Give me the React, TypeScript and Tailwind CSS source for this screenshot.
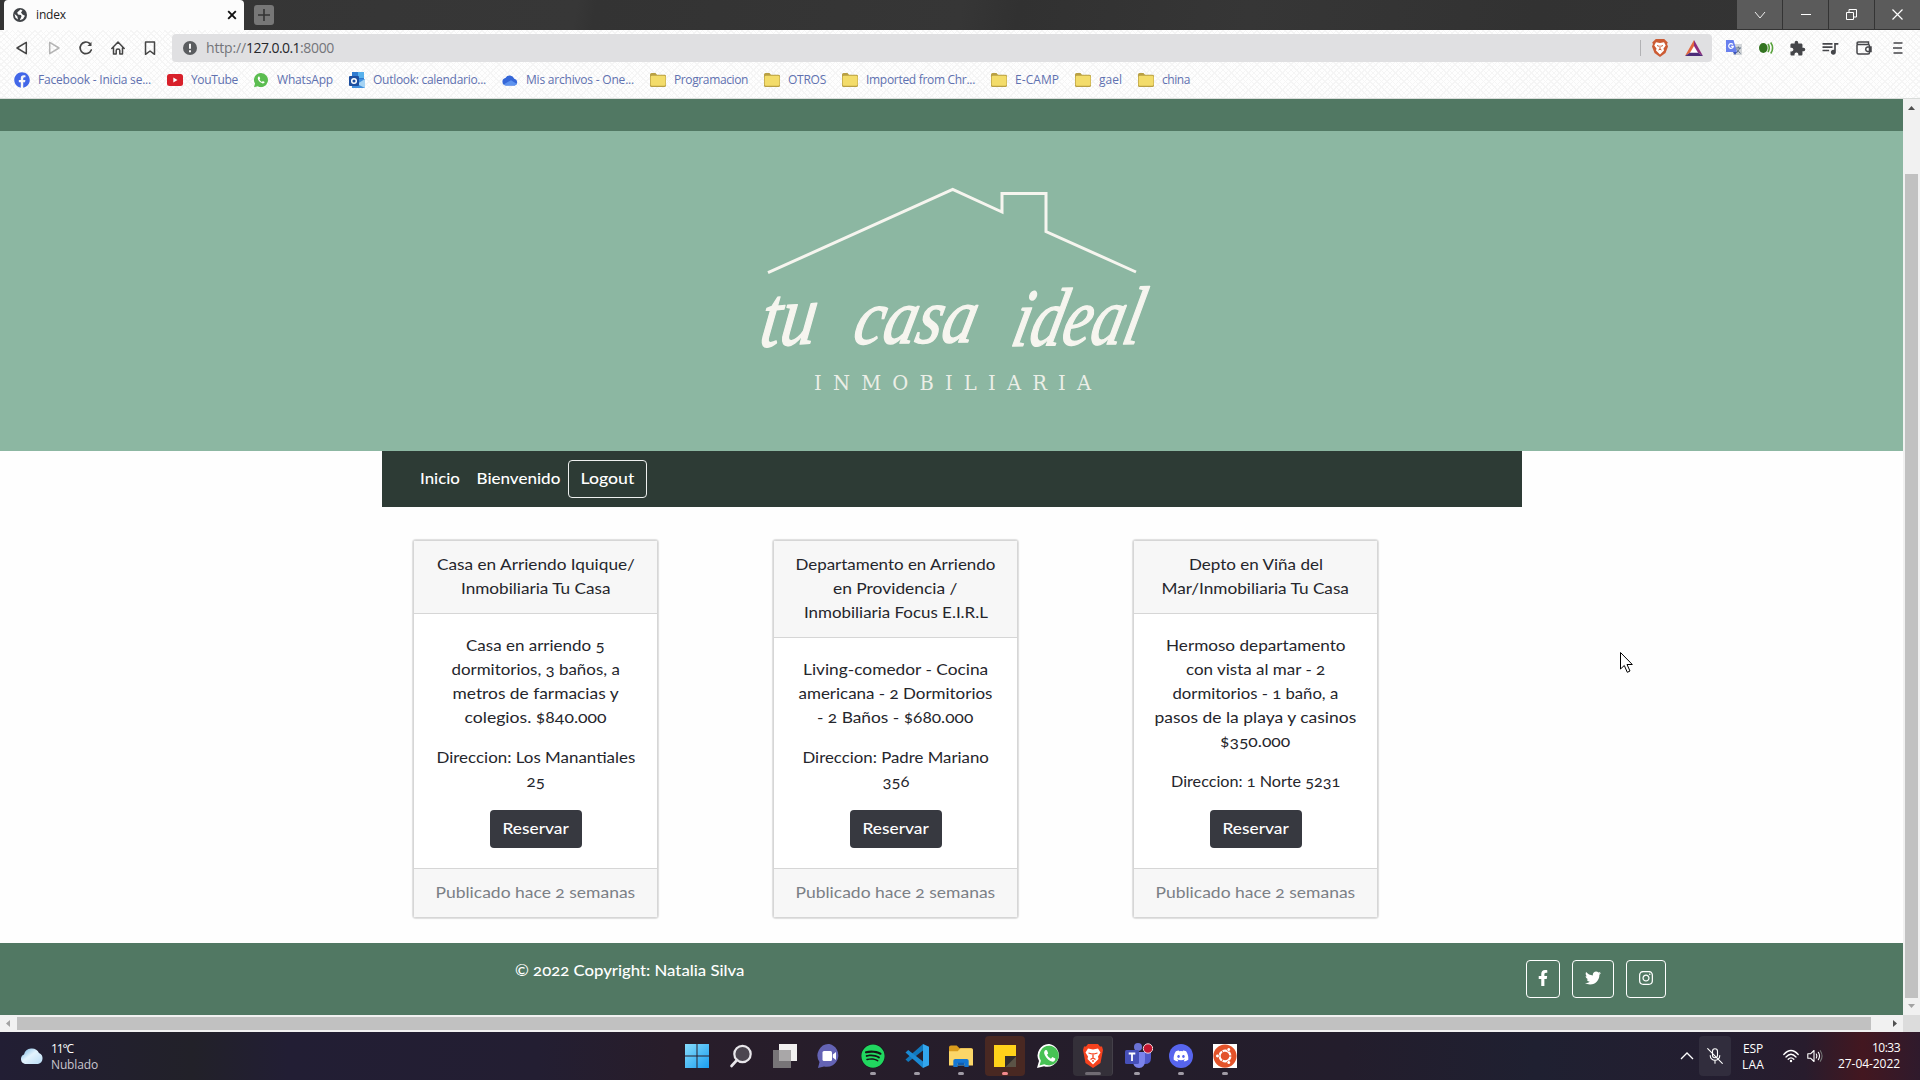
import { useLayoutEffect, useRef, type ReactNode } from "react";
import { FaFacebookF, FaTwitter, FaInstagram, FaSpotify, FaDiscord, FaUbuntu, FaFacebook } from "react-icons/fa";
import { MdExtension, MdQueueMusic } from "react-icons/md";

/* Text set to an exact advance width through letter spacing. */
function Fit({ w, children, className = "" }: { w: number; children: string; className?: string }) {
  const ref = useRef<HTMLSpanElement>(null);
  useLayoutEffect(() => {
    const el = ref.current;
    if (!el) return;
    el.style.letterSpacing = "0px";
    const natural = el.getBoundingClientRect().width;
    el.style.letterSpacing = `${(w - natural) / children.length}px`;
  }, [w, children]);
  return (
    <span ref={ref} className={`inline-block whitespace-pre ${className}`}>
      {children}
    </span>
  );
}

/* Text widened or narrowed to an exact width by stretching its letters. */
function Wide({ w, children, className = "" }: { w: number; children: string; className?: string }) {
  const ref = useRef<HTMLSpanElement>(null);
  useLayoutEffect(() => {
    const el = ref.current;
    if (el) el.style.transform = `scaleX(${w / el.offsetWidth})`;
  }, [w, children]);
  return (
    <span className={`inline-flex justify-center whitespace-pre ${className}`} style={{ width: w }}>
      <span ref={ref} className="inline-block shrink-0">{children}</span>
    </span>
  );
}

type Line = [string, number];

const Folder = () => (
  <svg width="16" height="16" viewBox="0 0 16 16">
    <path d="M0 2.500Q0 1 1.500 1H5.500L7 2.700H14.500Q16 2.700 16 4V13.500Q16 15 14.500 15H1.500Q0 15 0 13.500Z" fill="#b9a044" />
    <path d="M.7 5Q.7 3.800 2 3.800H14Q15.500 3.800 15.500 5V12.500Q15.500 13.800 14 13.800H2Q.7 13.800 .7 12.500Z" fill="#f3dc6a" />
  </svg>
);

const bookmarks: { icon: ReactNode; label: string; w: number; gap: string }[] = [
  { icon: <FaFacebook size={16} color="#4267e8" />, label: "Facebook - Inicia se...", w: 113, gap: "mr-4" },
  {
    icon: (
      <svg width="16" height="16" viewBox="0 0 16 16">
        <rect y="2" width="16" height="12" rx="2.500" fill="#d8202a" />
        <path d="M6.300 5.500L10.500 8L6.300 10.500Z" fill="#fff" />
      </svg>
    ),
    label: "YouTube", w: 47, gap: "mr-[15px]",
  },
  {
    icon: (
      <svg width="16" height="16" viewBox="0 0 16 16">
        <path d="M8 1A7 7 0 1 1 4.700 14.200L1 15.200L2 11.600A7 7 0 0 1 8 1Z" fill="#5bbd50" />
        <path d="M5.500 4.500Q4 5.500 5.200 8Q7 11.200 9.800 11.500Q11.500 11.300 11.700 10L9.800 9L9 9.900Q7.300 9.200 6.500 7.500L7.200 6.600L6.400 4.500Z" fill="#fff" />
      </svg>
    ),
    label: "WhatsApp", w: 56, gap: "mr-4",
  },
  {
    icon: (
      <svg width="16" height="16" viewBox="0 0 16 16">
        <rect x="3" width="12" height="8" fill="#2f7bd0" />
        <rect x="9" y="0" width="6" height="6" fill="#58b1ec" />
        <path d="M3 7H16V16H3Z" fill="#3f8fdd" />
        <path d="M16 7L8 12L16 16Z" fill="#a5d3f3" />
        <rect y="4" width="10" height="10" rx="1" fill="#1d4fa0" />
        <circle cx="5" cy="9" r="2.300" fill="none" stroke="#fff" strokeWidth="1.500" />
      </svg>
    ),
    label: "Outlook: calendario...", w: 113, gap: "mr-4",
  },
  {
    icon: (
      <svg width="16" height="16" viewBox="0 0 16 16">
        <path d="M4 13.500A3.800 3.800 0 0 1 3.400 6A5 5 0 0 1 12.300 6.700A3.500 3.500 0 0 1 12.700 13.500Z" fill="#3567d8" />
        <path d="M1.500 12.500L9 8.200L15 12A3.500 3.500 0 0 1 12.700 13.500H4Z" fill="#5e93ee" />
      </svg>
    ),
    label: "Mis archivos - One...", w: 108, gap: "mr-4",
  },
  { icon: <Folder />, label: "Programacion", w: 74, gap: "mr-4" },
  { icon: <Folder />, label: "OTROS", w: 38, gap: "mr-4" },
  { icon: <Folder />, label: "Imported from Chr...", w: 109, gap: "mr-4" },
  { icon: <Folder />, label: "E-CAMP", w: 44, gap: "mr-4" },
  { icon: <Folder />, label: "gael", w: 23, gap: "mr-4" },
  { icon: <Folder />, label: "china", w: 28, gap: "" },
];

const cards: { title: Line[]; body: Line[]; address: Line[] }[] = [
  {
    title: [["Casa en Arriendo Iquique/", 198], ["Inmobiliaria Tu Casa", 149]],
    body: [["Casa en arriendo 5", 139], ["dormitorios, 3 baños, a", 168], ["metros de farmacias y", 166], ["colegios. $840.000", 142]],
    address: [["Direccion: Los Manantiales", 199], ["25", 18]],
  },
  {
    title: [["Departamento en Arriendo", 200], ["en Providencia /", 124], ["Inmobiliaria Focus E.I.R.L", 184]],
    body: [["Living-comedor - Cocina", 185], ["americana - 2 Dormitorios", 194], ["- 2 Baños - $680.000", 156]],
    address: [["Direccion: Padre Mariano", 186], ["356", 27]],
  },
  {
    title: [["Depto en Viña del", 134], ["Mar/Inmobiliaria Tu Casa", 187]],
    body: [["Hermoso departamento", 180], ["con vista al mar - 2", 139], ["dormitorios - 1 baño, a", 166], ["pasos de la playa y casinos", 202], ["$350.000", 70]],
    address: [["Direccion: 1 Norte 5231", 169]],
  },
];

const Lines = ({ lines }: { lines: Line[] }) => (
  <>
    {lines.map(([text, w]) => (
      <div key={text} className="flex h-6 justify-center">
        <Wide w={w}>{text}</Wide>
      </div>
    ))}
  </>
);

function Card({ title, body, address }: (typeof cards)[number]) {
  return (
    <article className="flex w-[245px] flex-col rounded-[3px] border border-[#d6d6d6] bg-white shadow-[0_0_1px_1px_#dedede]">
      <div className="border-b border-[#d6d6d6] bg-[#f7f7f7] pb-[13px] pt-[11px]">
        <Lines lines={title} />
      </div>
      <div className="flex flex-1 flex-col items-center px-5 pb-5 pt-[19px]">
        <div className="mb-4"><Lines lines={body} /></div>
        <div className="mb-4"><Lines lines={address} /></div>
        <button className="mt-auto flex h-[38px] w-[92px] shrink-0 justify-center rounded bg-[#373940] pt-1.5 font-medium text-white">
          <Wide w={66}>Reservar</Wide>
        </button>
      </div>
      <div className="flex h-[49px] justify-center border-t border-[#d6d6d6] bg-[#f7f7f7] pt-[11px] text-[#7b8086]">
        <Wide w={200}>Publicado hace 2 semanas</Wide>
      </div>
    </article>
  );
}

const Slot = ({ children, dot = "", bg = "" }: { children: ReactNode; dot?: string; bg?: string }) => (
  <div className="flex w-11 justify-center">
    <div className={`flex h-10 w-10 flex-col items-center rounded pt-2 ${bg}`}>
      <div className="flex h-6 w-6 items-center justify-center">{children}</div>
      <div className={`mt-1 h-[3px] shrink-0 rounded-full ${dot}`} />
    </div>
  </div>
);

const DOT = "w-1.5 bg-[#a09ba5]";

function BrowserChrome() {
  return (
    <header className="shrink-0 font-['Open_Sans','Noto_Sans',sans-serif]">
      <div className="flex h-[30px] bg-[linear-gradient(100deg,#343434_0%,#373737_30%,#333_31%,#363636_50%,#313131_53%,#363636_65%,#323232_80%,#353535_100%)] pl-1">
        <div className="flex w-60 items-center rounded-t-sm bg-[#fcfcfc] pl-[9px] pr-[7px]">
          <svg width="14" height="14" viewBox="0 0 14 14">
            <circle cx="7" cy="7" r="7" fill="#404347" />
            <path d="M7.500 1.500L4.200 4.400L5 6.500L8 7L8.500 8.500L6.800 12.300L10 11L12 7.800L9.500 6.500L8 4.500L9.500 2.500Z" fill="#fff" />
            <path d="M1.500 6L4.300 8.200L5 11.500L2.500 9.800Z" fill="#fff" />
          </svg>
          <span className="ml-[9px] pb-px text-xs text-[#222]"><Fit w={30}>index</Fit></span>
          <svg className="ml-auto" width="10" height="10" viewBox="0 0 10 10"><path d="M1.200 1.200L8.800 8.800M8.800 1.200L1.200 8.800" stroke="#111" strokeWidth="1.900" /></svg>
        </div>
        <div className="ml-[10px] mt-[5px] flex h-5 w-5 items-center justify-center rounded-[3px] bg-[#777]">
          <svg width="12" height="12" viewBox="0 0 12 12"><path d="M6 0V12M0 6H12" stroke="#343434" strokeWidth="1.600" /></svg>
        </div>
        <div className="ml-auto flex h-[29px] gap-px">
          <div className="flex w-[45px] items-center justify-center bg-[#5b5b5b]"><svg width="12" height="8" viewBox="0 0 12 8"><path d="M1 1L6 7L11 1" fill="none" stroke="#eee" /></svg></div>
          <div className="flex w-[45px] items-center justify-center bg-[#5b5b5b]"><div className="h-px w-[10px] bg-white" /></div>
          <div className="flex w-[45px] items-center justify-center bg-[#5b5b5b]"><svg width="11" height="11" viewBox="0 0 11 11" fill="none" stroke="#fff"><path d="M.5 3.500H7.500V10.500H.5ZM3 3.500V.5H10.500V8H7.500" /></svg></div>
          <div className="flex w-[45px] items-center justify-center bg-[#5b5b5b]"><svg width="11" height="11" viewBox="0 0 11 11"><path d="M.5 .5L10.500 10.500M10.500 .5L.5 10.500" stroke="#fff" strokeWidth="1.200" /></svg></div>
        </div>
      </div>
      <div className="h-[69px] border-b border-[#d9dcda] bg-[repeating-linear-gradient(45deg,#f5f5f5_0_1px,transparent_1px_4px),repeating-linear-gradient(-45deg,#f5f5f5_0_1px,#fefefe_1px_4px)] pt-1">
        <div className="flex h-7 items-center">
          <div className="flex w-[172px] pl-1.5 text-[#454545]">
            <div className="flex w-8 justify-center"><svg width="16" height="16" viewBox="0 0 16 16" fill="none" stroke="currentColor" strokeWidth="1.500" strokeLinejoin="round"><path d="M12.300 2.300V13.700L3 8Z" /></svg></div>
            <div className="flex w-8 justify-center text-[#b4b4b4]"><svg width="16" height="16" viewBox="0 0 16 16" fill="none" stroke="currentColor" strokeWidth="1.500" strokeLinejoin="round"><path d="M3.700 2.300V13.700L13 8Z" /></svg></div>
            <div className="flex w-8 justify-center"><svg width="16" height="16" viewBox="0 0 16 16" fill="none" stroke="currentColor" strokeWidth="1.700" strokeLinecap="round"><path d="M13.300 10A5.800 5.800 0 1 1 11.800 3.500" /><path d="M13.500 2V6H9.500Z" fill="currentColor" stroke="none" /></svg></div>
            <div className="flex w-8 justify-center"><svg width="16" height="16" viewBox="0 0 16 16" fill="none" stroke="currentColor" strokeWidth="1.500" strokeLinejoin="round" strokeLinecap="round"><path d="M1.800 8.500L8 2L14.200 8.500M3.500 7.500V14H6.200V10.500Q6.200 9 8 9Q9.800 9 9.800 10.500V14H12.500V7.500" /></svg></div>
            <div className="flex w-8 justify-center"><svg width="16" height="16" viewBox="0 0 16 16" fill="none" stroke="currentColor" strokeWidth="1.500" strokeLinejoin="round"><path d="M3.500 2H12.500V14.300L8 11L3.500 14.300Z" /></svg></div>
          </div>
          <div className="flex h-7 w-[1540px] items-center rounded bg-[#e0e0e2] pl-[11px]">
            <svg width="14" height="14" viewBox="0 0 14 14"><circle cx="7" cy="7" r="7" fill="#5b5d60" /><path d="M7 2.800V7.800M7 9.300V11.200" stroke="#fff" strokeWidth="1.900" /></svg>
            <div className="ml-[9px] flex text-sm leading-5 text-[#74757a]">
              <Fit w={40}>http://</Fit><Fit w={54} className="text-[#26272b]">127.0.0.1</Fit><Fit w={34}>:8000</Fit>
            </div>
            <div className="ml-auto flex items-center">
              <div className="h-4 w-px bg-[#b2b2b4]" />
              <svg className="ml-[11px]" width="16" height="18" viewBox="0 0 16 18"><path d="M3.800 0H12.200L14 1.800L15.800 3.500L15 5L16 7.500L13.500 14L8 18L2.500 14L0 7.500L1 5L.2 3.500L2 1.800Z" fill="#cc5b33" /><path d="M4 3.300L8 4L12 3.300L13.700 6.500L11.500 9.500L12 11.500L8 15.500L4 11.500L4.500 9.500L2.300 6.500Z" fill="#fff" /><path d="M5 6.500L7 7.300M11 6.500L9 7.300M8 6.500V10.500M6.500 11L8 10.200L9.500 11" stroke="#cc5b33" fill="none" /></svg>
              <svg className="ml-[17px] mr-[9px]" width="18" height="16" viewBox="0 0 18 16"><path d="M9 0L0 16L9 10Z" fill="#e2653d" /><path d="M9 0L18 16L9 10Z" fill="#8c2c7c" /><path d="M0 16H18L9 10Z" fill="#4b2b78" /><path d="M9 6L13 12.700H5Z" fill="#fff" /></svg>
            </div>
          </div>
          <div className="flex flex-1 items-center text-[#45464a]">
            <svg className="ml-[14px]" width="16" height="16" viewBox="0 0 16 16"><rect x="7" y="4" width="9" height="11" fill="#d2d5d8" /><path d="M9.500 8H15M12.300 6.500V8M10.500 13L14 8M10.500 9L14.500 13.500" stroke="#61728b" fill="none" /><path d="M0 0H7.500L11 12H0Z" fill="#6980ee" /><path d="M7 12H11L9 15Z" fill="#3d55b4" /><path d="M6.800 4.500A2.300 2.300 0 1 0 7.300 6.300H5.200" fill="none" stroke="#fff" strokeWidth="1.200" /></svg>
            <svg className="ml-[17px]" width="16" height="14" viewBox="0 0 16 14"><ellipse cx="4.300" cy="7" rx="4.300" ry="5" fill="#337321" /><path d="M9 3Q11.500 7 9 11M11.700 1.500Q15.500 7 11.700 12.500" fill="none" stroke="#57a23b" strokeWidth="1.600" /></svg>
            <MdExtension className="ml-[14px]" size={17} />
            <MdQueueMusic className="ml-[14px]" size={20} />
            <svg className="ml-4" width="16" height="14" viewBox="0 0 16 14" fill="none" stroke="currentColor" strokeWidth="1.500"><path d="M1 3.500V11.500Q1 13 2.500 13H12Q13.500 13 13.500 11.500V5Q13.500 3.500 12 3.500H2.500Q1 3.500 1 2.300Q1 1 2.500 1H12.500V3.500M15 6H11.500A2.300 2.300 0 0 0 11.500 10.500H15Z" /></svg>
            <svg className="ml-[21px]" width="10" height="12" viewBox="0 0 10 12"><path d="M.5 1H9.500M0 6H9M.5 11H9.500" stroke="currentColor" strokeWidth="1.600" /></svg>
          </div>
        </div>
        <div className="flex h-9 items-center pl-[14px] text-xs leading-4 text-[#6071b0]">
          {bookmarks.map((b) => (
            <div key={b.label} className={`flex items-center gap-2 ${b.gap}`}>
              {b.icon}
              <Fit w={b.w}>{b.label}</Fit>
            </div>
          ))}
        </div>
      </div>
    </header>
  );
}

function Site() {
  return (
    <main className="h-[916px] w-[1903px] overflow-hidden bg-[#fefefe] font-[Lato,sans-serif] text-base leading-6 text-[#25262c] oldstyle-nums">
      <div className="h-8 bg-[#517863]" />
      <div className="flex h-80 justify-center bg-[#8cb7a2]">
        <svg width="460" height="320" viewBox="722 131 460 320" fill="#f6f5ef">
          <path d="M768 272.700L952.700 189.500L1002 212V193.500H1046V231.500L1136 272" fill="none" stroke="#f6f5ef" strokeWidth="3" />
          <g fontFamily="Liberation Serif, serif" fontStyle="italic" fontSize="78" stroke="#f6f5ef" strokeWidth="1.400" strokeLinejoin="round">
            <text transform="translate(758 347) rotate(-4) skewX(-12)" fontSize="86" textLength="56" lengthAdjust="spacingAndGlyphs">tu</text>
            <text transform="translate(851 344) rotate(-1) skewX(-14)" textLength="121" lengthAdjust="spacingAndGlyphs">casa</text>
            <text transform="translate(1009 346) rotate(-1) skewX(-14)" fontSize="82" textLength="129" lengthAdjust="spacingAndGlyphs">ideal</text>
          </g>
          <text x="814" y="389.500" fontFamily="DejaVu Serif, serif" fontSize="19.500" textLength="277" opacity=".9">INMOBILIARIA</text>
        </svg>
      </div>
      <div className="ml-[382px] w-[1140px]">
        <nav className="flex h-14 items-start bg-[#2d3b35] pl-[38px] pt-[9px] font-medium text-white">
          <Wide w={40} className="mt-1.5">Inicio</Wide>
          <Wide w={84} className="ml-4 mt-1.5">Bienvenido</Wide>
          <div className="ml-2 flex h-[38px] w-[79px] justify-center rounded border border-[#eef0ef] pt-[5px]"><Wide w={54}>Logout</Wide></div>
        </nav>
        <section className="ml-[31px] mt-[33px] flex h-[378px] gap-[115px]">
          {cards.map((c) => <Card key={c.title[0][0]} {...c} />)}
        </section>
      </div>
      <footer className="mt-[25px] flex h-[72px] bg-[#517863] pl-[515px] text-white">
        <Wide w={229} className="mt-[15px] h-6 font-medium">© 2022 Copyright: Natalia Silva</Wide>
        <div className="ml-[782px] mt-[17px] flex gap-3">
          <div className="flex h-[38px] w-[34px] items-center justify-center rounded border border-white pb-0.5"><FaFacebookF size={16} /></div>
          <div className="flex h-[38px] w-[42px] items-center justify-center rounded border border-white pb-0.5"><FaTwitter size={16} /></div>
          <div className="flex h-[38px] w-10 items-center justify-center rounded border border-white pb-0.5"><FaInstagram size={16} /></div>
        </div>
      </footer>
    </main>
  );
}

function Taskbar() {
  return (
    <div className="grid h-12 shrink-0 grid-cols-[675px_1fr_260px] bg-[linear-gradient(90deg,#221e34_0%,#222129_10%,#221e34_15%,#231e32_28%,#281d2a_35%,#241d2b_60%,#231d2c_70%,#1f2031_80%,#241e30_90%,#281c2d_94%,#431720_97%,#2f1a2c_100%)] font-['Open_Sans','Noto_Sans',sans-serif] text-xs leading-4 text-white">
      <div className="flex items-center pl-5">
        <svg width="23" height="18" viewBox="0 0 23 18">
          <defs><linearGradient id="cloud" x1="0" y1="0" x2="1" y2="1"><stop stopColor="#6fb1df" /><stop offset=".45" stopColor="#e3f3fd" /><stop offset="1" stopColor="#b9dcf5" /></linearGradient></defs>
          <path d="M5 17A5 5 0 0 1 4 7.500A8 8 0 0 1 19 6A5.800 5.800 0 0 1 18 17Z" fill="url(#cloud)" />
        </svg>
        <div className="ml-2 flex flex-col items-start pt-px">
          <Fit w={22}>11°C</Fit><Fit w={47} className="text-[#c9c6ce]">Nublado</Fit>
        </div>
      </div>
      <div className="flex pt-1">
        <Slot><svg width="24" height="24" viewBox="0 0 24 24"><defs><linearGradient id="win" x1="0" y1="0" x2="1" y2="1"><stop stopColor="#86dcfb" /><stop offset="1" stopColor="#1a9ef0" /></linearGradient></defs><path d="M0 0H11.500V11.500H0ZM12.500 0H24V11.500H12.500ZM0 12.500H11.500V24H0ZM12.500 12.500H24V24H12.500Z" fill="url(#win)" /></svg></Slot>
        <Slot><svg width="24" height="24" viewBox="0 0 24 24"><circle cx="13.500" cy="10" r="8.200" fill="#4c4650" stroke="#e8e6ea" strokeWidth="2.200" /><path d="M8 16L2.500 22" stroke="#e8e6ea" strokeWidth="2.600" strokeLinecap="round" /></svg></Slot>
        <Slot><svg width="24" height="24" viewBox="0 0 24 24"><rect x="6" width="18" height="17" fill="#f1f0f0" /><rect y="6" width="18" height="18" fill="#777477" /><rect x="6" y="6" width="12" height="11" fill="#a9a7a8" /></svg></Slot>
        <Slot><svg width="24" height="24" viewBox="0 0 24 24"><path d="M12.500 0A11.500 11.500 0 1 1 7 22.500L1 24L2.500 18A11.500 11.500 0 0 1 12.500 0Z" fill="#6463b4" /><rect x="5.500" y="7" width="9.500" height="10" rx="1.500" fill="#fff" /><path d="M15.800 10.500L19 8V16L15.800 13.500Z" fill="#fff" /></svg></Slot>
        <Slot dot={DOT}><div className="flex h-6 w-6 items-center justify-center rounded-full bg-[#151515]"><FaSpotify size={24} color="#21d760" className="shrink-0" /></div></Slot>
        <Slot dot={DOT}><svg width="24" height="24" viewBox="0 0 24 24"><path d="M18 0L24 2.700V21.300L18 24Z" fill="#32a6ee" /><path d="M18 0V6.500L3.200 18L.5 15.500Z" fill="#1177bb" /><path d="M18 24V17.500L3.200 6L.5 8.500Z" fill="#1b8ad3" /></svg></Slot>
        <Slot dot={DOT}><svg width="25" height="24" viewBox="0 0 25 24"><path d="M0 3Q0 1 2 1H8L11 4H23Q25 4 25 6V10H0Z" fill="#d99b1c" /><path d="M0 7H9L12 4H23Q25 4 25 6V22H0Z" fill="#fbd668" /><path d="M4.500 23.500V17Q4.500 15 6.500 15H18.500Q20.500 15 20.500 17V23.500H16V19.500H9V23.500Z" fill="#1477d4" /><rect x="9" y="19" width="7" height="3" fill="#0f5eb0" /></svg></Slot>
        <Slot bg="bg-[#492822]" dot="w-1.5 bg-[#f3898d]"><svg width="22" height="22" viewBox="0 0 22 22"><path d="M0 0H22V22H0Z" fill="#ffd21a" /><path d="M11 11H22V22H11Z" fill="#302c2c" /><path d="M11.500 22L22 11.500V22Z" fill="#5b5346" /></svg></Slot>
        <Slot><svg width="24" height="24" viewBox="0 0 24 24"><path d="M12.500 0A11.500 11.500 0 1 1 7 22.300L0 24L2 17A11.500 11.500 0 0 1 12.500 0Z" fill="#fff" /><path d="M12.500 1.800A9.800 9.800 0 1 1 7.300 20.200L2.500 21.500L3.900 16.800A9.800 9.800 0 0 1 12.500 1.800Z" fill="#47c254" /><path d="M8.500 6Q6 8 8 11.500Q11 17 15.500 17.700Q18.300 17.500 18.300 14.500L15.300 13L14 14.700Q11.200 13.500 10 10.800L11.200 9.500L10 6.200Z" fill="#fff" /></svg></Slot>
        <Slot bg="border-r border-[#444049] bg-[#343039]" dot="w-4 bg-[#706b73]">
          <svg width="20" height="24" viewBox="0 0 20 24"><path d="M5 0H15L17 2.500H19L20 6L17.500 19L10 24L2.500 19L0 6L1 2.500H3Z" fill="#f5421e" /><path d="M5 4.500L10 5.500L15 4.500L17.500 8.500L15 12.500L15.500 15L10 20.500L4.500 15L5 12.500L2.500 8.500Z" fill="#fff" /><path d="M5.500 9L9 10M14.500 9L11 10M10 9V14M7.500 15.500L10 14L12.500 15.500M10 16V18" stroke="#f5421e" strokeWidth="1.300" fill="none" /></svg>
        </Slot>
        <Slot dot={DOT}><svg className="ml-1 shrink-0" width="28" height="26" viewBox="0 0 28 26"><circle cx="13" cy="4" r="4" fill="#6a72d4" /><path d="M16 9H26V15Q26 21 20 21H16Z" fill="#5059c9" /><path d="M8 9H20V17Q20 25 14 25Q8 25 8 18Z" fill="#7b83eb" /><rect y="7" width="14" height="14" rx="1.500" fill="#4650b8" /><path d="M3.700 10.500H10.300M7 10.500V18" stroke="#fff" strokeWidth="1.800" /><circle cx="23" cy="5.500" r="4.700" fill="#c4162f" stroke="#f2d7da" strokeWidth="1" /></svg></Slot>
        <Slot dot={DOT}><div className="flex h-6 w-6 items-center justify-center rounded-full bg-[#5765ee]"><FaDiscord size={16} /></div></Slot>
        <Slot dot={DOT}><div className="flex h-6 w-6 items-center justify-center bg-white"><FaUbuntu size={24} color="#e3532a" /></div></Slot>
      </div>
      <div className="flex items-center pr-5">
        <svg className="ml-5" width="14" height="8" viewBox="0 0 14 8"><path d="M1 7L7 1L13 7" fill="none" stroke="#fff" strokeWidth="1.300" /></svg>
        <div className="ml-[5px] flex h-10 w-8 items-center justify-center rounded bg-[#312d3d]">
          <svg width="16" height="16" viewBox="0 0 16 16" fill="none" stroke="#fff" strokeWidth="1.100" strokeLinecap="round"><rect x="5.500" y=".8" width="5" height="9" rx="2.500" /><path d="M3.200 7.500A4.800 4.800 0 0 0 12.800 7.500M8 12.300V15.300M.7 .7L15.300 15.300" /></svg>
        </div>
        <div className="ml-[11px] flex w-[22px] flex-col items-center pt-px"><Fit w={20}>ESP</Fit><Fit w={22}>LAA</Fit></div>
        <svg className="ml-[19px]" width="16" height="14" viewBox="0 0 16 14" fill="none" stroke="#fff" strokeWidth="1.300" strokeLinecap="round"><path d="M.8 5.500Q8-2.500 15.200 5.500M3 8Q8 2.500 13 8M5.200 10.300Q8 7.300 10.800 10.300" /><circle cx="8" cy="12" r="1.200" fill="#fff" stroke="none" /></svg>
        <svg className="ml-2" width="16" height="14" viewBox="0 0 16 14" fill="none" stroke="#fff" strokeWidth="1.100" strokeLinecap="round" strokeLinejoin="round"><path d="M.8 4.800H3.500L7 1.500V12.500L3.500 9.200H.8Z" /><path d="M9.300 5Q10.500 7 9.300 9M11.300 3.300Q13.800 7 11.300 10.700" /><path d="M13.300 1.700Q16.800 7 13.300 12.300" stroke="#777" /></svg>
        <div className="ml-auto flex flex-col items-end"><Fit w={28}>10:33</Fit><Fit w={62}>27-04-2022</Fit></div>
      </div>
    </div>
  );
}

export default function App() {
  return (
    <div className="relative flex h-[1080px] w-[1920px] flex-col overflow-hidden bg-white">
      <BrowserChrome />
      <div className="grid h-[933px] shrink-0 grid-cols-[1903px_17px] grid-rows-[916px_17px] bg-[#f1f1f1]">
        <Site />
        <div className="flex flex-col items-center">
          <svg className="mt-[7px]" width="7" height="4" viewBox="0 0 7 4"><path d="M0 4L3.500 0L7 4Z" fill="#505050" /></svg>
          <div className="mt-16 h-[824px] w-[13px] bg-[#c1c1c1]" />
          <svg className="mt-1.5" width="7" height="4" viewBox="0 0 7 4"><path d="M0 0L3.500 4L7 0Z" fill="#a3a3a3" /></svg>
        </div>
        <div className="flex items-center">
          <svg className="ml-1.5" width="4" height="7" viewBox="0 0 4 7"><path d="M4 0L0 3.500L4 7Z" fill="#a3a3a3" /></svg>
          <div className="ml-[7px] h-[13px] w-[1854px] bg-[#c1c1c1]" />
          <svg className="ml-[22px]" width="4" height="7" viewBox="0 0 4 7"><path d="M0 0L4 3.500L0 7Z" fill="#505050" /></svg>
        </div>
        <div className="bg-[#dcdcdc]" />
      </div>
      <Taskbar />
      <svg className="absolute left-[1620px] top-[652px]" width="13" height="21" viewBox="0 0 13 21"><path d="M.5 .5V17L4.300 13.500L7.300 20.300L10 19L7 12.500H12.300Z" fill="#fff" stroke="#000" /></svg>
    </div>
  );
}
